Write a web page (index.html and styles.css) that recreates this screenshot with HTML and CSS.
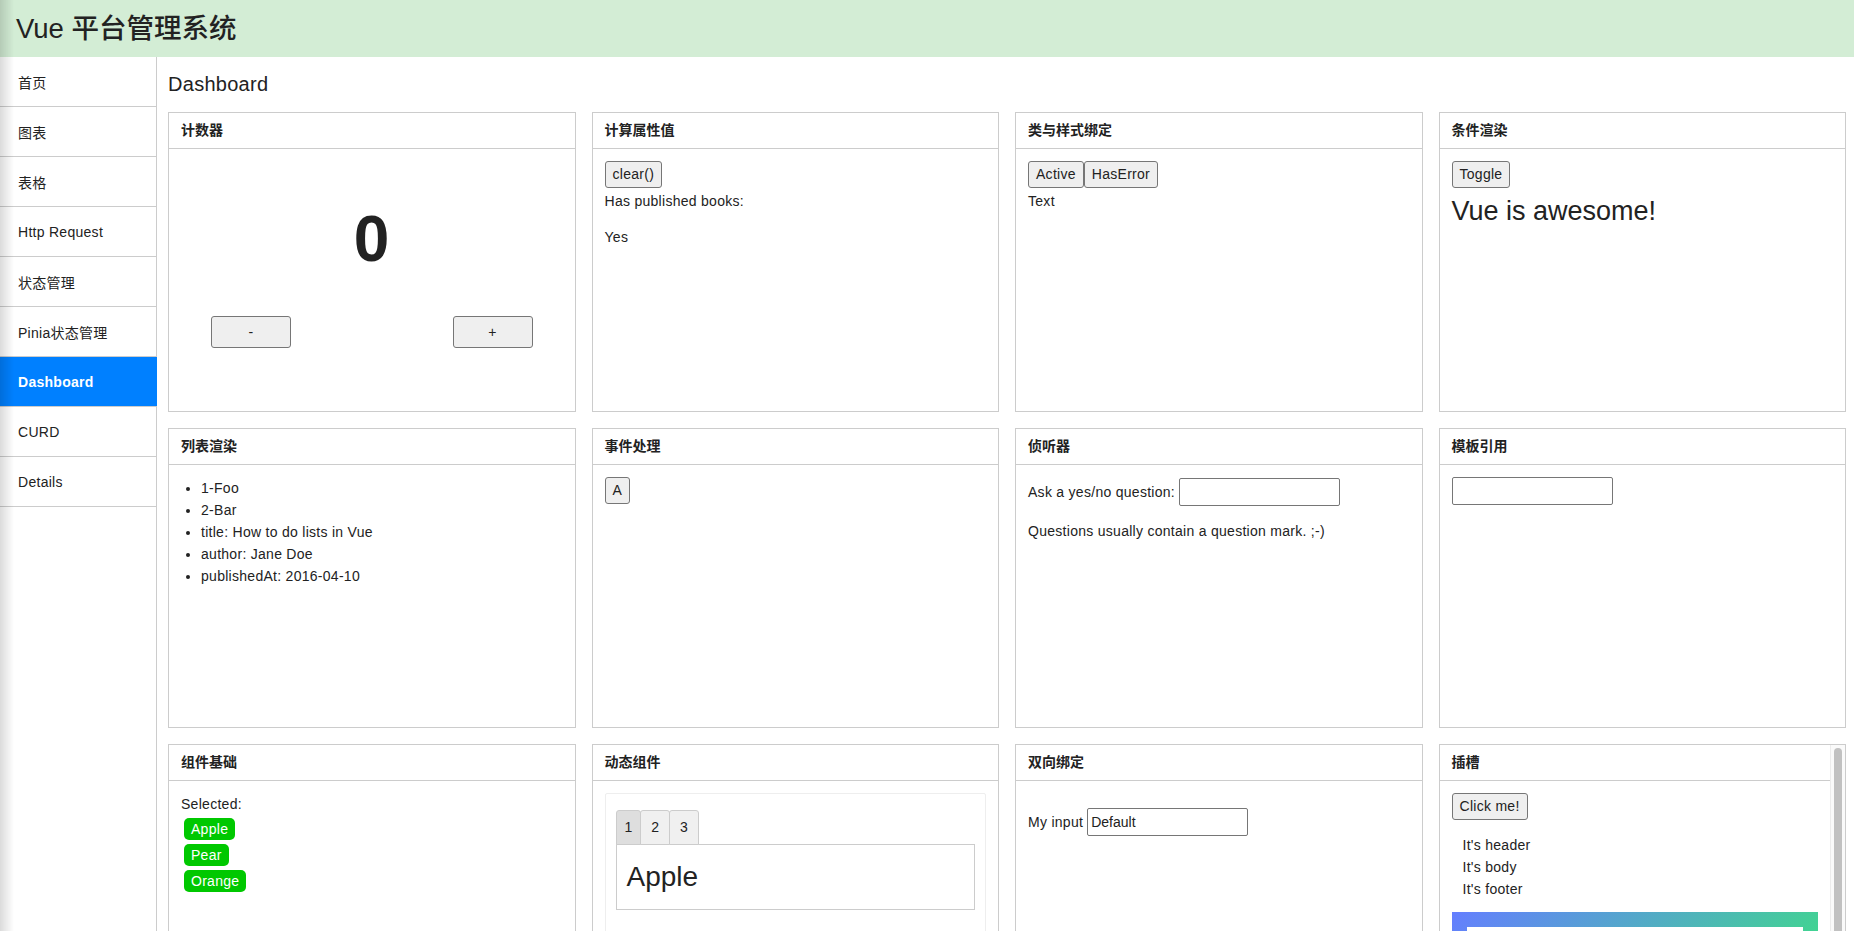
FILE: index.html
```html
<!DOCTYPE html>
<html lang="zh-CN">
<head>
<meta charset="utf-8">
<title>Vue 平台管理系统</title>
<link rel="stylesheet" href="styles.css">
</head>
<body>
<header class="topbar"><h1 class="brand">Vue 平台管理系统</h1></header>
<div class="layout">
  <nav class="sidebar">
    <a class="nav-item">首页</a>
    <a class="nav-item">图表</a>
    <a class="nav-item">表格</a>
    <a class="nav-item">Http Request</a>
    <a class="nav-item">状态管理</a>
    <a class="nav-item">Pinia状态管理</a>
    <a class="nav-item active">Dashboard</a>
    <a class="nav-item">CURD</a>
    <a class="nav-item">Details</a>
  </nav>
  <main class="main">
    <h2 class="page-title">Dashboard</h2>
    <div class="grid">
      <section class="card">
        <div class="card-header">计数器</div>
        <div class="card-body">
          <div class="counter-value">0</div>
          <div class="counter-actions">
            <button class="btn btn-wide">-</button>
            <button class="btn btn-wide">+</button>
          </div>
        </div>
      </section>

      <section class="card">
        <div class="card-header">计算属性值</div>
        <div class="card-body">
          <div class="row"><button class="btn">clear()</button></div>
          <p class="after-btn">Has published books:</p>
          <span>Yes</span>
        </div>
      </section>

      <section class="card">
        <div class="card-header">类与样式绑定</div>
        <div class="card-body">
          <div class="row"><button class="btn">Active</button><button class="btn">HasError</button></div>
          <div class="after-btn">Text</div>
        </div>
      </section>

      <section class="card">
        <div class="card-header">条件渲染</div>
        <div class="card-body">
          <div class="row"><button class="btn">Toggle</button></div>
          <h1 class="awesome">Vue is awesome!</h1>
        </div>
      </section>

      <section class="card">
        <div class="card-header">列表渲染</div>
        <div class="card-body">
          <ul class="list">
            <li>1-Foo</li>
            <li>2-Bar</li>
            <li>title: How to do lists in Vue</li>
            <li>author: Jane Doe</li>
            <li>publishedAt: 2016-04-10</li>
          </ul>
        </div>
      </section>

      <section class="card">
        <div class="card-header">事件处理</div>
        <div class="card-body">
          <div class="row"><button class="btn">A</button></div>
        </div>
      </section>

      <section class="card">
        <div class="card-header">侦听器</div>
        <div class="card-body">
          <p class="field-row">Ask a yes/no question: <input class="input" type="text"></p>
          <p>Questions usually contain a question mark. ;-)</p>
        </div>
      </section>

      <section class="card">
        <div class="card-header">模板引用</div>
        <div class="card-body">
          <div class="row"><input class="input" type="text"></div>
        </div>
      </section>

      <section class="card">
        <div class="card-header">组件基础</div>
        <div class="card-body">
          <div>Selected:</div>
          <div class="tags">
            <span class="tag">Apple</span>
            <span class="tag">Pear</span>
            <span class="tag">Orange</span>
          </div>
        </div>
      </section>

      <section class="card">
        <div class="card-header">动态组件</div>
        <div class="card-body">
          <div class="demo">
            <div class="tabs">
              <button class="tab-btn active">1</button>
              <button class="tab-btn">2</button>
              <button class="tab-btn">3</button>
            </div>
            <div class="tab-panel">Apple</div>
          </div>
        </div>
      </section>

      <section class="card">
        <div class="card-header">双向绑定</div>
        <div class="card-body">
          <div class="model-row">My input <input class="input" type="text" value="Default"></div>
        </div>
      </section>

      <section class="card card-scroll">
        <div class="scroll-content">
          <div class="card-header">插槽</div>
          <div class="card-body">
            <div class="row"><button class="btn">Click me!</button></div>
            <div class="slot-layout">
              <div>It's header</div>
              <div>It's body</div>
              <div>It's footer</div>
            </div>
            <div class="fancy"><div class="fancy-inner"></div></div>
          </div>
        </div>
        <div class="scrollbar"><div class="scrollbar-thumb"></div></div>
      </section>
    </div>
  </main>
</div>
</body>
</html>
```

FILE: styles.css
```css
* { box-sizing: border-box; }

html, body {
  margin: 0;
  height: 100%;
  overflow: hidden;
}

body {
  font-family: "Liberation Sans", "Noto Sans CJK SC", sans-serif;
  font-size: 14px;
  letter-spacing: 0.28px;
  color: #222;
  background: #fff;
}

body::before {
  content: "";
  position: fixed;
  left: 0;
  top: 0;
  bottom: 0;
  width: 14px;
  background: linear-gradient(to right, rgba(0, 0, 0, 0.14), rgba(0, 0, 0, 0));
  pointer-events: none;
  z-index: 10;
}

.topbar {
  height: 57px;
  background: #d3edd5;
  display: flex;
  align-items: center;
  padding-left: 16px;
}

.brand {
  margin: 0;
  font-size: 27.5px;
  font-weight: 500;
  letter-spacing: 0;
  color: #222;
  line-height: 1;
}

.layout {
  display: flex;
  height: calc(100% - 57px);
}

.sidebar {
  width: 157px;
  flex: none;
  border-right: 1px solid #ccc;
  display: flex;
  flex-direction: column;
}

.nav-item {
  height: 50px;
  flex: none;
  border-bottom: 1px solid #ccc;
  padding-left: 18px;
  display: flex;
  align-items: center;
  color: #222;
  text-decoration: none;
}

.nav-item.active {
  background: #0080ff;
  color: #fff;
  font-weight: 700;
  margin-right: -1px;
}

.main {
  flex: 1;
  min-width: 0;
  padding: 0 8px 0 11px;
  overflow: hidden;
}

.page-title {
  margin: 15px 0 16px;
  font-size: 20px;
  font-weight: 400;
  line-height: 24px;
}

.grid {
  display: grid;
  grid-template-columns: repeat(4, minmax(0, 1fr));
  grid-auto-rows: 300px;
  gap: 16px;
}

.card {
  border: 1px solid #ccc;
  background: #fff;
  min-height: 0;
  overflow: hidden;
}

.card-header {
  height: 36px;
  line-height: 35px;
  padding: 0 12px;
  border-bottom: 1px solid #ccc;
  font-weight: 600;
  font-size: 14px;
  letter-spacing: 0;
}

.card-body {
  padding: 12px;
  line-height: 22px;
}

.card-body p {
  margin: 0 0 14px;
}

.row {
  display: flex;
  align-items: center;
}

.btn {
  font: inherit;
  font-size: 14px;
  letter-spacing: 0.28px;
  line-height: 17px;
  padding: 4px 7px;
  border: 1px solid #767676;
  border-radius: 3px;
  background: #efefef;
  color: #222;
  margin: 0;
}

.after-btn {
  margin-top: 2px !important;
}

/* counter */
.counter-value {
  text-align: center;
  font-size: 64px;
  font-weight: 700;
  line-height: 80px;
  padding-top: 38px;
}

.counter-actions {
  display: flex;
  justify-content: space-between;
  padding: 0 30px;
  margin-top: 37px;
}

.btn-wide {
  width: 80px;
  height: 32px;
}

.awesome {
  font-size: 27px;
  font-weight: 400;
  letter-spacing: 0;
  line-height: 34px;
  margin: 6px 0 0;
}

.list {
  margin: 0;
  padding-left: 20px;
}

.field-row {
  display: flex;
  align-items: center;
  gap: 4px;
  margin-top: 1px !important;
}

.input {
  width: 161px;
  height: 28px;
  border: 1px solid #767676;
  border-radius: 2px;
  padding: 0 3px;
  font: inherit;
  font-size: 14px;
  color: #222;
  background: #fff;
  margin: 0;
}

.tags {
  display: flex;
  flex-direction: column;
  align-items: flex-start;
  gap: 4px;
  margin: 3px 0 0 3px;
}

.tag {
  background: #00c800;
  color: #fff;
  border-radius: 5px;
  height: 22px;
  line-height: 22px;
  padding: 0 7px;
}

.demo {
  border: 1px solid #eee;
  border-radius: 2px;
  padding: 16px 10px 40px;
}

.tabs {
  display: flex;
}

.tab-btn {
  font: inherit;
  font-size: 14px;
  color: #222;
  height: 35px;
  line-height: 33px;
  padding: 0 10px;
  border: 1px solid #ccc;
  border-radius: 3px 3px 0 0;
  background: #f0f0f0;
  margin: 0 -1px -1px 0;
}

.tab-btn.active {
  background: #dedede;
  padding: 0 8px;
}

.tab-panel {
  border: 1px solid #ccc;
  padding: 10px;
  font-size: 28px;
  letter-spacing: 0;
  line-height: 44px;
}

.model-row {
  display: flex;
  align-items: center;
  gap: 4px;
  margin-top: 15px;
}

/* slot card with visible scrollbar */
.card-scroll {
  display: flex;
}

.scroll-content {
  flex: 1;
  min-width: 0;
  overflow: hidden;
}

.scrollbar {
  width: 15px;
  flex: none;
  background: #fafafa;
  border-left: 1px solid #ececec;
  padding: 3px;
}

.scrollbar-thumb {
  height: 240px;
  background: #c1c1c1;
  border-radius: 4px;
}

.slot-layout {
  padding-left: 11px;
  margin-top: 14px;
}

.fancy {
  margin-top: 12px;
  padding: 15px;
  background: linear-gradient(315deg, #42d392 25%, #647eff);
}

.fancy-inner {
  height: 120px;
  background: #fff;
}
```
